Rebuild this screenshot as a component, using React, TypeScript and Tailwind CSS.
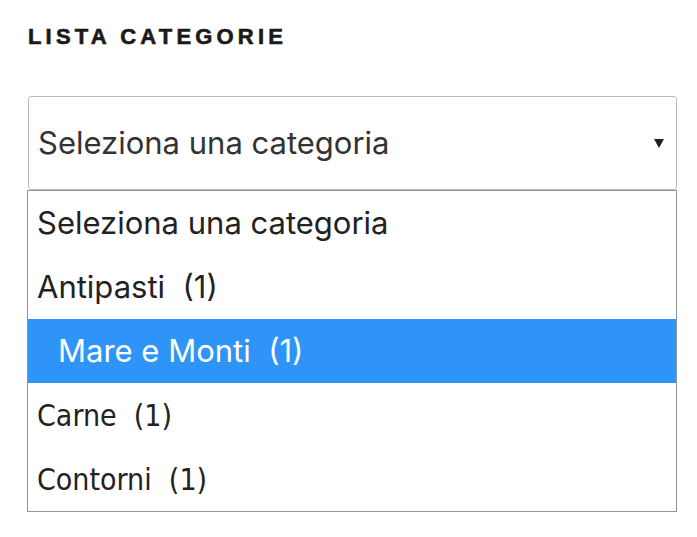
export default function App() {
  const rows = [
    { t: "Seleziona una categoria", hl: false, cond: false },
    { t: "Antipasti\u00a0\u00a0(1)", hl: false, cond: false },
    { t: "Mare e Monti\u00a0\u00a0(1)", hl: true, cond: false },
    { t: "Carne\u00a0\u00a0(1)", hl: false, cond: true },
    { t: "Contorni\u00a0\u00a0(1)", hl: false, cond: true },
  ];
  return (
    <div className="w-[697px] h-[537px] bg-white pl-[28px] pr-[20px] pt-[26px]">
      <h2
        className="text-[22px] leading-[22px] font-black tracking-[0.19em] text-[#1a1a1a] [-webkit-text-stroke:0.6px_#1a1a1a]"
        style={{ fontFamily: '"Liberation Sans", Arial, sans-serif' }}
      >
        LISTA CATEGORIE
      </h2>
      <div
        className="mt-[48px] h-[94px] border border-[#bbbbbb] rounded-[3px] flex items-center justify-between pl-[9px] pr-[12px] text-[#333]"
        style={{ fontFamily: "Inter, sans-serif" }}
      >
        <span className="text-[31px]">Seleziona una categoria</span>
        <svg width="10" height="9" viewBox="0 0 10 9" className="mt-[1px]">
          <path d="M0 0 H10 L5 9 Z" fill="#222" />
        </svg>
      </div>
      <div className="-ml-px border border-[#8a98a6] text-[#222]">
        {rows.map((r, i) => (
          <div
            key={i}
            className={
              "h-[64px] flex items-center " +
              (r.hl ? "bg-[#2e94f7] text-white pl-[30px]" : "pl-[9px]")
            }
            style={{
              fontFamily: r.cond
                ? '"Liberation Sans Narrow", "DejaVu Sans Condensed", sans-serif'
                : "Inter, sans-serif",
            }}
          >
            <span className={r.cond ? "text-[30px]" : "text-[31px]"}>{r.t}</span>
          </div>
        ))}
      </div>
    </div>
  );
}
